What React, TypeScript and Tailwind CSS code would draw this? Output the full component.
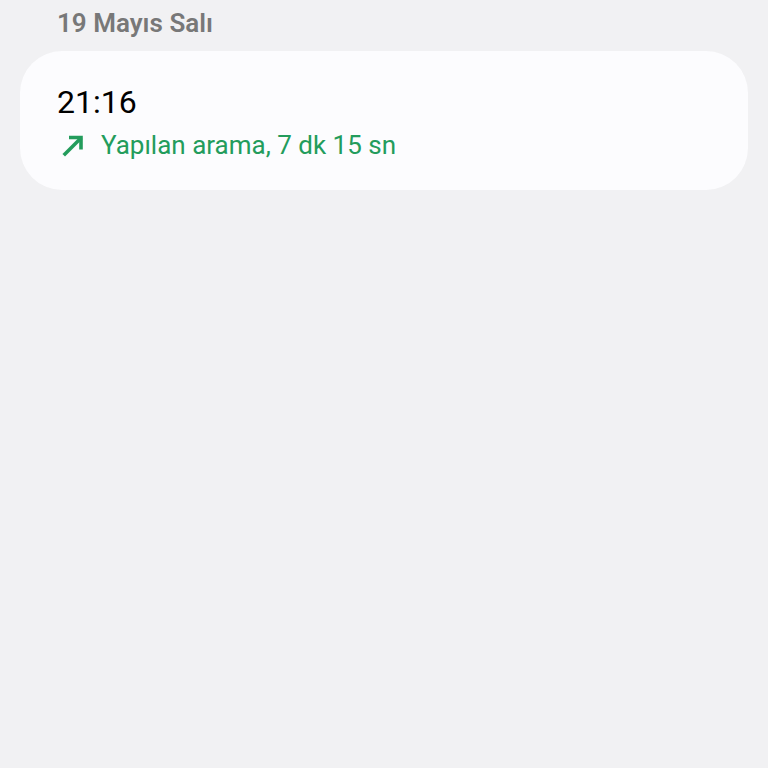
export default function App() {
  return (
    <div
      className="min-h-[768px] w-full bg-[#f1f1f3] px-5 pt-[3px]"
      style={{ fontFamily: "Roboto, 'Noto Sans', sans-serif" }}
    >
      <h2 className="pl-[37px] text-[26px] font-semibold leading-[40px] text-[#787878]">19 Mayıs Salı</h2>
      <div className="mt-[8px] flex h-[139px] flex-col rounded-[42px] bg-[#fcfcfe] pl-[37px] pt-[31px]">
        <div className="text-[32px] leading-[40px] text-black">21:16</div>
        <div className="mt-[6px] flex items-center gap-[16px] text-[26px] leading-[34px] text-[#239c5c]">
          <svg width="24" height="24" viewBox="0 0 24 24" className="ml-[4px]" fill="none" stroke="currentColor" strokeWidth="3.6" strokeLinecap="square">
            <path d="M4 21 L19 6" />
            <path d="M8 4.5 H20 V16.5" strokeLinecap="butt" strokeLinejoin="miter" />
          </svg>
          <span>Yapılan arama, 7 dk 15 sn</span>
        </div>
      </div>
    </div>
  );
}
